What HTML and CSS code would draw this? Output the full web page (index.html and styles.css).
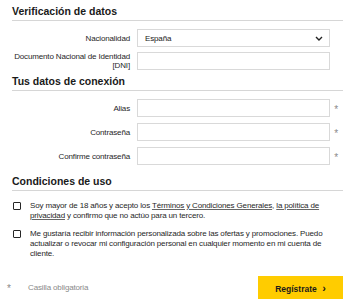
FILE: index.html
```html
<!DOCTYPE html>
<html lang="es">
<head>
<meta charset="utf-8">
<title>Registro</title>
<link rel="stylesheet" href="styles.css">
</head>
<body>
<form class="page">
  <h2 class="section-title">Verificación de datos</h2>
  <div class="fields fields-first">
    <div class="row">
      <label class="label">Nacionalidad</label>
      <div class="control select">
        <span>España</span>
        <svg class="chev" width="8" height="5" viewBox="0 0 8 5"><path d="M1 1 L4 4 L7 1" fill="none" stroke="#222" stroke-width="1.4"/></svg>
      </div>
      <span class="req"></span>
    </div>
    <div class="row">
      <label class="label">Documento Nacional de Identidad<br>[DNI]</label>
      <div class="control"></div>
      <span class="req"></span>
    </div>
  </div>

  <h2 class="section-title">Tus datos de conexión</h2>
  <div class="fields">
    <div class="row">
      <label class="label">Alias</label>
      <div class="control"></div>
      <span class="req">*</span>
    </div>
    <div class="row">
      <label class="label">Contraseña</label>
      <div class="control"></div>
      <span class="req">*</span>
    </div>
    <div class="row">
      <label class="label">Confirme contraseña</label>
      <div class="control"></div>
      <span class="req">*</span>
    </div>
  </div>

  <h2 class="section-title title-terms">Condiciones de uso</h2>
  <div class="checks">
    <div class="check">
      <span class="box"></span>
      <p>Soy mayor de 18 años y acepto los <a>Términos y Condiciones Generales</a>, <a>la política de privacidad</a> y confirmo que no actúo para un tercero.</p>
    </div>
    <div class="check">
      <span class="box"></span>
      <p>Me gustaría recibir información personalizada sobre las ofertas y promociones. Puedo actualizar o revocar mi configuración personal en cualquier momento en mi cuenta de cliente.</p>
    </div>
  </div>

  <div class="footer">
    <div class="legend"><span class="legend-star">*</span><span>Casilla obligatoria</span></div>
    <button type="button" class="submit">Regístrate <span class="arrow">›</span></button>
  </div>
</form>
</body>
</html>
```
FILE: styles.css
```css
html, body {
  margin: 0;
  padding: 0;
  background: #ffffff;
}
body {
  font-family: "Liberation Sans", Arial, sans-serif;
  font-size: 8px;
  letter-spacing: -0.15px;
  color: #1f1f1f;
}
.page {
  width: 331px;
  padding: 0 7px 0 12px;
}
.section-title {
  margin: 0;
  padding: 4px 0 2px;
  line-height: 14px;
  height: 14px;
  font-size: 10.5px;
  font-weight: bold;
  letter-spacing: 0;
  color: #1a1a1a;
  border-bottom: 1px solid #d6d6d6;
}
.title-terms {
  margin-top: 5px;
}
.fields {
  display: flex;
  flex-direction: column;
  gap: 6px;
  padding: 8px 0 0;
}
.fields-first {
  gap: 5px;
}
.row {
  display: flex;
  align-items: center;
  height: 18px;
}
.label {
  width: 118px;
  flex: none;
  text-align: right;
  line-height: 9px;
  margin-right: 7px;
}
.control {
  width: 193px;
  height: 18px;
  box-sizing: border-box;
  border: 1px solid #d9d9d9;
  background: #fff;
  display: flex;
  align-items: center;
  padding: 0 7px;
}
.select {
  justify-content: space-between;
  padding-right: 6px;
  color: #1a1a1a;
}
.req {
  width: 13px;
  flex: none;
  text-align: right;
  padding: 4px 5px 0 0;
  box-sizing: border-box;
  color: #8a8a8a;
  font-size: 10px;
  line-height: 10px;
}
.checks {
  display: flex;
  flex-direction: column;
  gap: 8px;
  padding-top: 10px;
}
.check {
  display: flex;
  align-items: flex-start;
}
.box {
  flex: none;
  width: 8px;
  height: 8px;
  box-sizing: border-box;
  border: 1px solid #262626;
  border-radius: 1px;
  margin: 1px 9px 0 1px;
}
.check p {
  margin: 0;
  line-height: 10px;
  width: 313px;
}
.check a {
  text-decoration: underline;
  text-decoration-color: #666;
}
.footer {
  display: flex;
  justify-content: space-between;
  align-items: center;
  margin-top: 17px;
}
.legend {
  display: flex;
  align-items: center;
  color: #8a8a8a;
  margin-left: -5px;
}
.legend-star {
  width: 21px;
  font-size: 10px;
  line-height: 10px;
  padding-top: 3px;
}
.submit {
  width: 85px;
  height: 23px;
  border: none;
  background: #ffcc00;
  font-family: "Liberation Sans", Arial, sans-serif;
  font-size: 8.5px;
  font-weight: bold;
  color: #1a1a1a;
  padding: 0;
}
.arrow {
  font-size: 11px;
  margin-left: 3px;
}
```
